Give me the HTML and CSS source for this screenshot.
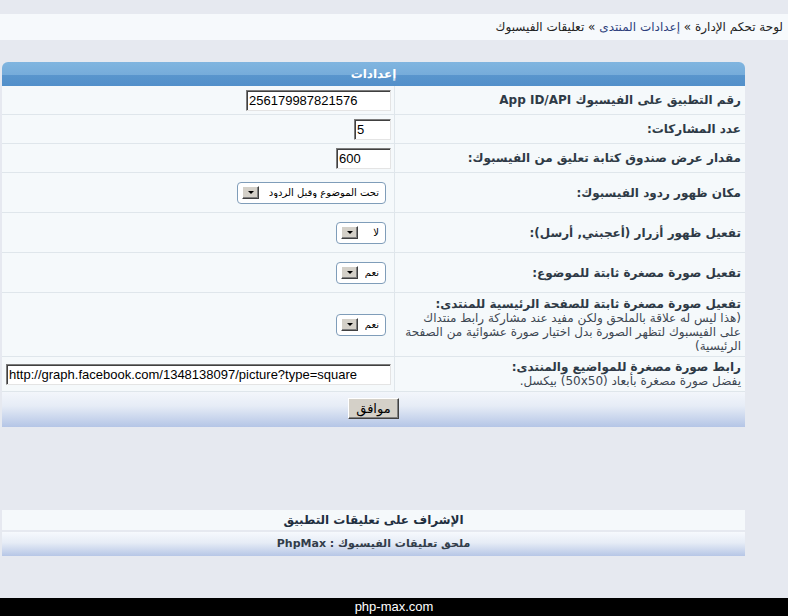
FILE: index.html
```html
<!DOCTYPE html>
<html lang="ar" dir="rtl">
<head>
<meta charset="utf-8">
<title>تعليقات الفيسبوك</title>
<link rel="stylesheet" href="styles.css">
</head>
<body>
<div class="crumbs">
  <a class="crumb">لوحة تحكم الإدارة</a>&nbsp;»&nbsp;<a class="crumb crumb-mid">إعدادات المنتدى</a>&nbsp;»&nbsp;<span class="crumb">تعليقات الفيسبوك</span>
</div>

<div class="panel">
  <div class="panel-head">إعدادات</div>

  <div class="row r-s">
    <div class="lbl"><span class="lbl-title">رقم التطبيق على الفيسبوك App ID/API</span></div>
    <div class="fld"><input class="txt w-id" value="256179987821576"></div>
  </div>
  <div class="row r-s">
    <div class="lbl"><span class="lbl-title">عدد المشاركات:</span></div>
    <div class="fld"><input class="txt w-num" value="5"></div>
  </div>
  <div class="row r-s">
    <div class="lbl"><span class="lbl-title">مقدار عرض صندوق كتابة تعليق من الفيسبوك:</span></div>
    <div class="fld"><input class="txt w-width" value="600"></div>
  </div>
  <div class="row r-m">
    <div class="lbl"><span class="lbl-title">مكان ظهور ردود الفيسبوك:</span></div>
    <div class="fld"><div class="sel"><span class="sel-text">تحت الموضوع وقبل الردود</span><span class="sel-btn"></span></div></div>
  </div>
  <div class="row r-m">
    <div class="lbl"><span class="lbl-title">تفعيل ظهور أزرار (أعجبني, أرسل):</span></div>
    <div class="fld"><div class="sel sel-sm"><span class="sel-text">لا</span><span class="sel-btn"></span></div></div>
  </div>
  <div class="row r-m">
    <div class="lbl"><span class="lbl-title">تفعيل صورة مصغرة ثابتة للموضوع:</span></div>
    <div class="fld"><div class="sel sel-sm"><span class="sel-text">نعم</span><span class="sel-btn"></span></div></div>
  </div>
  <div class="row r-l">
    <div class="lbl">
      <span class="lbl-title">تفعيل صورة مصغرة ثابتة للصفحة الرئيسية للمنتدى:</span>
      <span class="lbl-desc">(هذا ليس له علاقة بالملحق ولكن مفيد عند مشاركة رابط منتداك على الفيسبوك لتظهر الصورة بدل اختيار صورة عشوائية من الصفحة الرئيسية)</span>
    </div>
    <div class="fld"><div class="sel sel-sm"><span class="sel-text">نعم</span><span class="sel-btn"></span></div></div>
  </div>
  <div class="row r-u">
    <div class="lbl">
      <span class="lbl-title">رابط صورة مصغرة للمواضيع والمنتدى:</span>
      <span class="lbl-desc">يفضل صورة مصغرة بأبعاد (50x50) بيكسل.</span>
    </div>
    <div class="fld"><input class="txt w-url" value="http://graph.facebook.com/1348138097/picture?type=square"></div>
  </div>

  <div class="panel-foot"><button class="btn">موافق</button></div>
</div>

<div class="info">
  <div class="info-title">الإشراف على تعليقات التطبيق</div>
  <div class="info-sub">ملحق تعليقات الفيسبوك : PhpMax</div>
</div>

<div class="site-foot">php-max.com</div>
</body>
</html>
```

FILE: styles.css
```css
html, body {
  margin: 0;
  padding: 0;
  overflow: hidden;
}
body {
  background: #e6e9f0;
  font-family: "DejaVu Sans", sans-serif;
  font-size: 12px;
  color: #333c46;
  direction: rtl;
}

/* breadcrumb */
.crumbs {
  margin-top: 14px;
  height: 26px;
  background: #f6f9fc;
  display: flex;
  align-items: center;
  padding-right: 5px;
  font-size: 12px;
  color: #222;
}
.crumb { color: #222; text-decoration: none; }
.crumb-mid { color: #2d3f7c; }

/* settings panel */
.panel {
  margin-top: 22px;
  margin-left: 2px;
  margin-right: 43px;
}
.panel-head {
  height: 24px;
  line-height: 24px;
  border-radius: 6px 6px 0 0;
  background: linear-gradient(#80b5e0 0%, #76acda 54%, #5995cd 54%, #5290ca 100%);
  color: #fff;
  font-weight: bold;
  text-align: center;
  font-size: 12px;
}
.row {
  display: flex;
  background: #f5f9fb;
  border-bottom: 1px solid #dfe6eb;
}
.r-s { height: 28px; }
.r-m { height: 39px; }
.r-l { height: 63px; }
.r-u { height: 34px; }

.lbl {
  width: 351px;
  flex: none;
  box-sizing: border-box;
  padding: 0 4px;
  border-left: 1px solid #dfe6eb;
  display: flex;
  flex-direction: column;
  justify-content: center;
  line-height: 14px;
}
.lbl-title { font-weight: bold; color: #2e3a46; }
.lbl-desc { color: #3d4752; }

.fld {
  flex: 1;
  display: flex;
  align-items: center;
  padding-right: 3px;
}

/* text inputs */
.txt {
  box-sizing: border-box;
  height: 21px;
  border: 1px solid;
  border-color: #7c7c7c #e4e4e4 #e4e4e4 #7c7c7c;
  box-shadow: inset 1px 1px #404040;
  background: #fff;
  font-family: "Liberation Sans", Arial, sans-serif;
  font-size: 13px;
  color: #000;
  direction: ltr;
  text-align: left;
  padding: 1px 0 0 2px;
  margin: 0;
}
.w-id { width: 145px; }
.w-num { width: 37px; }
.w-width { width: 55px; }
.w-url { width: 385px; }

/* combo boxes */
.sel {
  box-sizing: border-box;
  width: 149px;
  height: 22px;
  margin-right: 5px;
  border: 1px solid #7f9db9;
  border-radius: 4px;
  background: #fff;
  display: flex;
  align-items: center;
  justify-content: space-between;
  padding: 0 6px 0 4px;
  font-size: 10px;
  color: #000;
  white-space: nowrap;
}
.sel-sm { width: 50px; }
.sel-text { overflow: hidden; }
.sel-btn {
  box-sizing: border-box;
  flex: none;
  width: 17px;
  height: 13px;
  background: #d4d0c8;
  border: 1px solid;
  border-color: #fff #404040 #404040 #fff;
  box-shadow: inset -1px -1px #808080;
  display: flex;
  align-items: center;
  justify-content: center;
}
.sel-btn::after {
  content: "";
  border-left: 3px solid transparent;
  border-right: 3px solid transparent;
  border-top: 3px solid #000;
}

.panel-foot {
  height: 35px;
  display: flex;
  align-items: center;
  justify-content: center;
  background: linear-gradient(#f3f6fb 0%, #e6ecf6 40%, #b4c5e6 100%);
}
.btn {
  box-sizing: border-box;
  width: 51px;
  height: 21px;
  margin-top: -2px;
  padding: 0;
  background: #d4d0c8;
  border: 1px solid;
  border-color: #fff #404040 #404040 #fff;
  box-shadow: inset -1px -1px #808080;
  font-family: "DejaVu Sans", sans-serif;
  font-size: 13px;
  color: #000;
}

/* info block */
.info {
  margin-top: 83px;
  margin-left: 2px;
  margin-right: 43px;
}
.info-title {
  height: 20px;
  line-height: 20px;
  background: #f5f9fb;
  text-align: center;
  font-weight: bold;
  font-size: 12px;
  color: #1f2f40;
}
.info-sub {
  margin-top: 2px;
  height: 24px;
  line-height: 24px;
  background: linear-gradient(#f6f9fd 0%, #e6ecf6 45%, #b6c6e6 100%);
  text-align: center;
  font-weight: bold;
  font-size: 11px;
  color: #323d4a;
}

.site-foot {
  margin-top: 42px;
  height: 18px;
  line-height: 18px;
  background: #000;
  color: #fff;
  text-align: center;
  font-family: "Liberation Sans", Arial, sans-serif;
  font-size: 13px;
  direction: ltr;
}
```
